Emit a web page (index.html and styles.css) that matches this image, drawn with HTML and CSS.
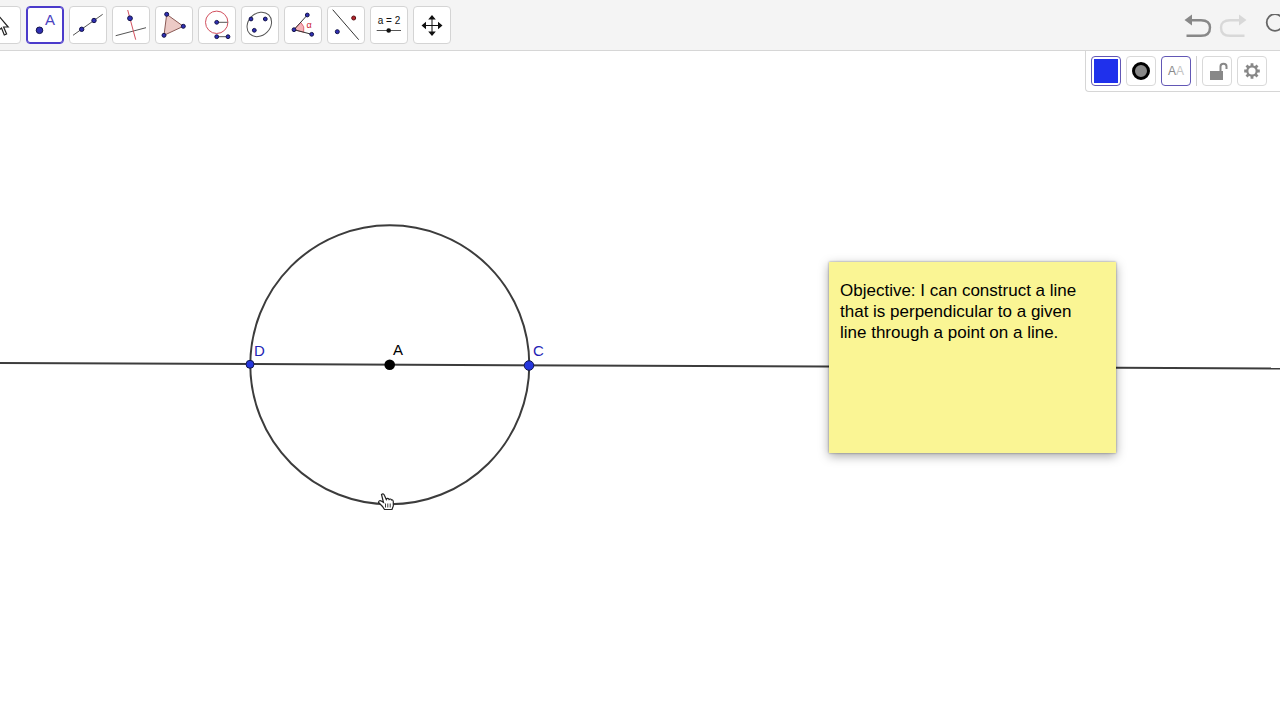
FILE: index.html
```
<!DOCTYPE html>
<html lang="en">
<head>
    <meta charset="UTF-8">
    <meta name="viewport" content="width=device-width, initial-scale=1.0">
    <title>Geometry</title>
    <link rel="stylesheet" href="styles.css">
</head>
<body>
    <header class="toolbar">
        <div class="tools">
            <button class="tool" aria-label="Move">
                <svg viewBox="0 0 36 36"><path d="M14 8V24L17.5 21L20.3 28L22.6 27L19.6 20H24.2Z" fill="#fff" stroke="#222" stroke-width="1.2"/></svg>
            </button>
            <button class="tool selected" aria-label="Point">
                <svg viewBox="0 0 36 36"><circle class="pt" cx="12.5" cy="23.3" r="3.3"/><text class="icon-a" x="23" y="18">A</text></svg>
            </button>
            <button class="tool" aria-label="Line">
                <svg viewBox="0 0 36 36"><path class="ln" d="M3 28.3L32.7 7.3"/><circle class="pt" cx="11.7" cy="22.3" r="2.2"/><circle class="pt" cx="24" cy="13.5" r="2.2"/></svg>
            </button>
            <button class="tool" aria-label="Perpendicular line">
                <svg viewBox="0 0 36 36"><path class="ln" d="M2.7 28.7L33 20.7"/><path class="ln red" d="M14.7 3L22.7 32.7"/><circle class="pt" cx="17" cy="11.3" r="2.4"/></svg>
            </button>
            <button class="tool" aria-label="Polygon">
                <svg viewBox="0 0 36 36"><path d="M10.7 7.3L27.3 19.3L8 28.3Z" fill="#eccac6" stroke="#8a5a55"/><circle class="pt" cx="10.7" cy="7.3" r="2"/><circle class="pt" cx="27.3" cy="19.3" r="2"/><circle class="pt" cx="8" cy="28.3" r="2"/></svg>
            </button>
            <button class="tool" aria-label="Circle">
                <svg viewBox="0 0 36 36"><circle class="ln red" cx="17.7" cy="15.3" r="11.2"/><path class="ln" d="M17.7 15.3H28.7M17.7 29.7H29"/><circle class="pt" cx="17.7" cy="15.3" r="1.9"/><circle class="pt" cx="17.7" cy="29.7" r="1.9"/><circle class="pt" cx="29" cy="29.7" r="1.9"/></svg>
            </button>
            <button class="tool" aria-label="Ellipse">
                <svg viewBox="0 0 36 36"><ellipse class="ln" cx="17.3" cy="17.4" rx="13.4" ry="11" transform="rotate(-45 17.3 17.4)"/><circle class="pt" cx="9" cy="12" r="1.9"/><circle class="pt" cx="23.3" cy="12" r="1.9"/><circle class="pt" cx="12.3" cy="23.3" r="1.9"/></svg>
            </button>
            <button class="tool" aria-label="Angle">
                <svg viewBox="0 0 36 36"><path d="M9 22.7L15.7 15.3A10 10 0 0 1 18.7 25.2Z" fill="#f6b3b8" stroke="#dd6b78"/><path class="ln dark" d="M22.3 8L9 22.7L26.7 27.3"/><circle class="pt" cx="9" cy="22.7" r="1.9"/><circle class="pt" cx="22.3" cy="8" r="1.9"/><circle class="pt" cx="26.7" cy="27.3" r="1.9"/><text class="icon-alpha" x="24" y="21">α</text></svg>
            </button>
            <button class="tool" aria-label="Reflect">
                <svg viewBox="0 0 36 36"><path class="ln dark" d="M4.7 2.7L30.7 32.7"/><circle class="pt" cx="9.3" cy="24.7" r="2"/><circle class="pt pt-red" cx="25.7" cy="11" r="2"/></svg>
            </button>
            <button class="tool" aria-label="Slider">
                <svg viewBox="0 0 36 36"><text class="icon-slider" x="18" y="17">a = 2</text><path class="ln" d="M5.7 23.5H30"/><circle cx="17.7" cy="23.5" r="2.3" fill="#111"/></svg>
            </button>
            <button class="tool" aria-label="Move graphics view">
                <svg viewBox="0 0 36 36"><path d="M18 11V26M10.5 18.5H25.5" stroke="#111"/><path d="M18 8L21.8 12.5H14.2ZM18 29L21.8 24.5H14.2ZM7.5 18.5L12 14.7V22.3ZM28.5 18.5L24 14.7V22.3Z" fill="#111"/></svg>
            </button>
        </div>
        <div class="actions">
            <button class="action" aria-label="Undo">
                <svg width="28" height="24" viewBox="0 0 28 24"><path d="M7 6.2H17C23 6.2 26 9 26 13.5C26 19 22.5 21.8 17 21.8H2.5" fill="none" stroke="#888" stroke-width="2.4"/><path d="M0.5 6L8 0.5V11.5Z" fill="#888"/></svg>
            </button>
            <button class="action" aria-label="Redo">
                <svg width="28" height="24" viewBox="0 0 28 24"><path d="M20 6.2H11C5 6.2 2 9 2 13.5C2 19 5.5 21.8 11 21.8H25.5" fill="none" stroke="#d8d8d8" stroke-width="2.4"/><path d="M27.5 6L20 0.5V11.5Z" fill="#d8d8d8"/></svg>
            </button>
            <button class="action search" aria-label="Search">
                <svg width="28" height="24" viewBox="0 0 28 24"><circle cx="10" cy="8.5" r="8.3" fill="none" stroke="#666" stroke-width="1.8"/><path d="M16 15L24 23" stroke="#666" stroke-width="2"/></svg>
            </button>
        </div>
    </header>

    <main class="canvas">
        <svg class="drawing">
            <line class="shape" x1="-1280" y1="306.5" x2="3840" y2="328.5"/>
            <circle class="shape" cx="389.8" cy="313.8" r="139.5"/>
            <circle class="point" cx="250" cy="313.3" r="4"/>
            <circle class="point" cx="529" cy="314.5" r="4.8"/>
            <circle cx="389.7" cy="313.8" r="5.3"/>
            <text class="label blue" x="254" y="305">D</text>
            <text class="label" x="393" y="304">A</text>
            <text class="label blue" x="533" y="305">C</text>
            <!-- hand cursor -->
            <path d="M381.5 443.500C383 442.3 384 443 384.5 444.5L386.300 448.5C387 447 388.6 447 389.1 448.500C390 447.6 391.2 448 391.5 449C392.7 448.5 393.3 449.5 393.3 451V455L392 458.5H384.5L382.5 455.5L378.6 451.500C378.5 449.5 380.2 449.3 381.7 450.3L383.500 451.5Z" fill="#fff" stroke="#222" stroke-width="1.2"/>
            <path d="M385.5 452.500V456.5M387.8 452.5V456.5M390.2 452.5V456.5" stroke="#222" stroke-width="0.9"/>
        </svg>

        <div class="stylebar">
            <button class="style-btn on" aria-label="Color"><span class="swatch"></span></button>
            <button class="style-btn" aria-label="Point style"><span class="dot"></span></button>
            <button class="style-btn on" aria-label="Label style"><span class="aa">A<span class="light">A</span></span></button>
            <span class="divider"></span>
            <button class="style-btn" aria-label="Lock">
                <svg width="28" height="28" viewBox="0 0 28 28"><rect x="7" y="14" width="13" height="9" fill="#888"/><path d="M17.5 14V9.5C17.5 5.8 23.5 5.8 23.5 9.5V12" fill="none" stroke="#888" stroke-width="2"/></svg>
            </button>
            <button class="style-btn" aria-label="Settings">
                <svg width="28" height="28" viewBox="0 0 28 28"><circle cx="14" cy="14" r="4.7" fill="none" stroke="#888" stroke-width="2.2"/><path d="M14 6.2V9M14 19V21.8M6.2 14H9M19 14H21.8M8.5 8.5L10.5 10.5M17.5 17.5L19.5 19.5M8.5 19.5L10.5 17.5M17.5 10.5L19.5 8.5" stroke="#888" stroke-width="2.8"/></svg>
            </button>
        </div>

        <p class="note">Objective: I can construct a line that is perpendicular to a given line through a point on a line.</p>
    </main>
</body>
</html>
```
FILE: styles.css
```
* {
    box-sizing: border-box;
}

body {
    display: flex;
    flex-direction: column;
    min-height: 100vh;
    margin: 0;
    background-color: white;
    font-family: "Liberation Sans", Arial, sans-serif;
    overflow: hidden;
}

button {
    padding: 0;
    font-family: inherit;
    cursor: pointer;
}

svg {
    display: block;
}

.toolbar {
    display: flex;
    justify-content: space-between;
    background-color: #f4f4f4;
    border-bottom: 1px solid #d6d6d6;
}

.tools {
    display: flex;
    gap: 5px;
    margin-left: -17px;
    padding: 6px 0;
}

.tool {
    width: 38px;
    height: 38px;
    background-color: white;
    border: 1px solid #d4d4d4;
    border-radius: 4px;
}

.tool.selected {
    border-color: #4b3bcb;
    box-shadow: inset 0 0 0 1px #4b3bcb;
}

.pt {
    fill: #2f2fb4;
    stroke: #14144a;
    stroke-width: 1px;
}

.pt-red {
    fill: #b4242c;
    stroke: #5a1216;
}

.ln {
    fill: none;
    stroke: #555;
    stroke-width: 1px;
}

.ln.dark {
    stroke: #333;
}

.ln.red {
    stroke: #d2505e;
}

.icon-a,
.icon-alpha,
.icon-slider {
    text-anchor: middle;
}

.icon-a {
    font-size: 15px;
    fill: #4a42c0;
}

.icon-alpha {
    font-size: 9px;
    fill: #cc2030;
}

.icon-slider {
    font-size: 10px;
    fill: #111;
}

.actions {
    display: flex;
    gap: 7px;
    margin-right: -13px;
    padding-top: 14px;
}

.action {
    height: 24px;
    border: none;
    background: none;
}

.search {
    margin-left: 11px;
}

.canvas {
    position: relative;
    flex: 1;
    overflow: hidden;
}

.drawing {
    position: absolute;
    width: 100%;
    height: 100%;
}

.shape {
    fill: none;
    stroke: #3c3c3c;
    stroke-width: 2px;
}

.point {
    fill: #2536dc;
    stroke: #14184f;
    stroke-width: 1px;
}

.label {
    font-size: 15px;
}

.label.blue {
    fill: #2222b4;
}

.stylebar {
    position: absolute;
    top: 0;
    right: 0;
    display: flex;
    align-items: center;
    gap: 5px;
    height: 41px;
    padding: 0 13px 0 5px;
    background-color: white;
    border: solid #d6d6d6;
    border-width: 0 0 1px 1px;
    border-radius: 0 0 0 4px;
}

.style-btn {
    display: flex;
    align-items: center;
    justify-content: center;
    width: 30px;
    height: 30px;
    background-color: white;
    border: 1px solid #d9d9d9;
    border-radius: 4px;
}

.style-btn.on {
    border-color: #6257b5;
}

.swatch {
    width: 24px;
    height: 24px;
    background-color: #1f30ec;
}

.dot {
    width: 18px;
    height: 18px;
    background-color: #888;
    border: 3px solid black;
    border-radius: 50%;
}

.aa {
    font-size: 12px;
    color: #888;
}

.light {
    color: #c4c4c4;
}

.divider {
    width: 1px;
    height: 30px;
    background-color: #d0d0d0;
}

.note {
    position: absolute;
    top: 211px;
    left: 829px;
    width: 287px;
    height: 191px;
    margin: 0;
    padding: 18px 32px 18px 11px;
    background-color: #faf594;
    box-shadow: 0 3px 10px rgba(0, 0, 0, 0.35), 0 0 2px rgba(0, 0, 0, 0.4);
    font-size: 17px;
    line-height: 21px;
}
```
